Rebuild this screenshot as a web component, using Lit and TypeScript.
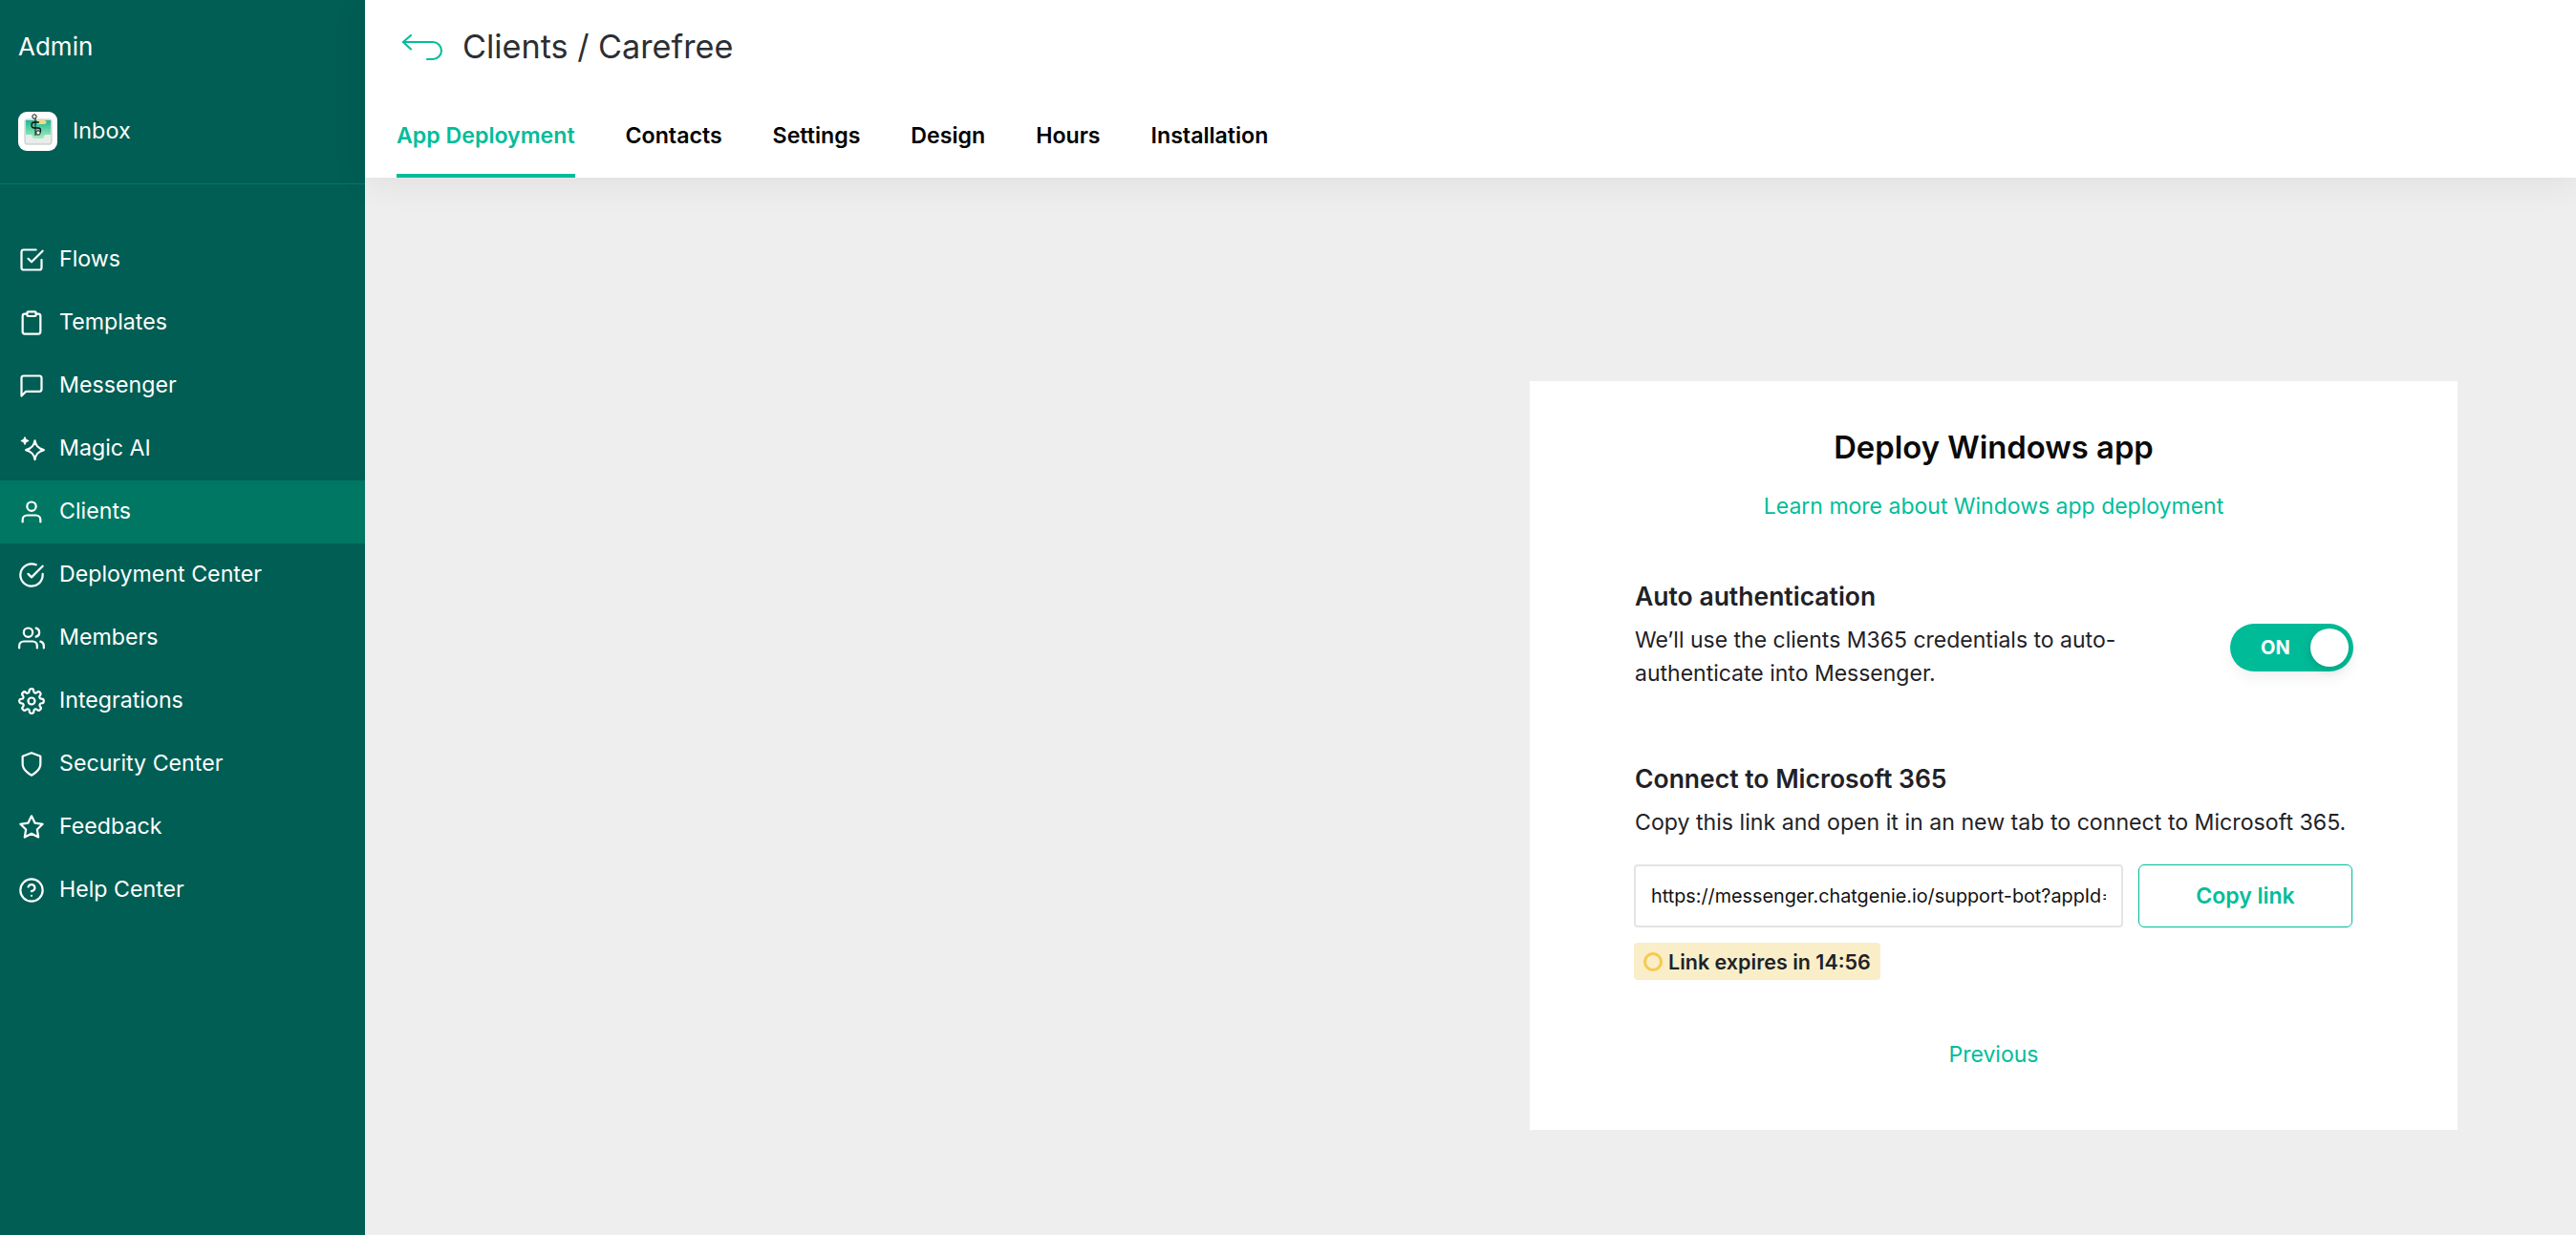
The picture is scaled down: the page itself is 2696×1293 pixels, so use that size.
import { LitElement, html, css, svg } from "lit";
import { customElement } from "lit/decorators.js";

const icons: Record<string, unknown> = {
  flows: svg`<polyline points="9 11 12 14 22 4"/><path d="M21 12v7a2 2 0 0 1-2 2H5a2 2 0 0 1-2-2V5a2 2 0 0 1 2-2h11"/>`,
  templates: svg`<path d="M16 4h2a2 2 0 0 1 2 2v14a2 2 0 0 1-2 2H6a2 2 0 0 1-2-2V6a2 2 0 0 1 2-2h2"/><rect x="8" y="2" width="8" height="4" rx="1"/>`,
  messenger: svg`<path d="M21 15a2 2 0 0 1-2 2H7l-4 4V5a2 2 0 0 1 2-2h14a2 2 0 0 1 2 2z"/>`,
  magic: svg`<path d="M15 4.5c.7 4.6 2.7 6.8 8 8.5-5.3 1.7-7.3 3.9-8 8.5-.7-4.6-2.7-6.8-8-8.5 5.3-1.7 7.3-3.9 8-8.5z"/><path d="M6 1.5l1 2.2 2.2 1-2.2 1-1 2.2-1-2.2-2.2-1 2.2-1z" fill="currentColor" stroke-width="1"/>`,
  clients: svg`<path d="M20 21v-2a4 4 0 0 0-4-4H8a4 4 0 0 0-4 4v2"/><circle cx="12" cy="7" r="4"/>`,
  deploy: svg`<path d="M22 11.08V12a10 10 0 1 1-5.93-9.14"/><polyline points="22 4 12 14.01 9 11.01"/>`,
  members: svg`<path d="M17 21v-2a4 4 0 0 0-4-4H5a4 4 0 0 0-4 4v2"/><circle cx="9" cy="7" r="4"/><path d="M23 21v-2a4 4 0 0 0-3-3.87"/><path d="M16 3.13a4 4 0 0 1 0 7.75"/>`,
  integrations: svg`<circle cx="12" cy="12" r="3"/><path d="M19.4 15a1.65 1.65 0 0 0 .33 1.82l.06.06a2 2 0 0 1-2.83 2.83l-.06-.06a1.65 1.65 0 0 0-2.82 1.17V21a2 2 0 0 1-4 0v-.09a1.65 1.65 0 0 0-2.82-1.18l-.06.06a2 2 0 0 1-2.83-2.83l.06-.06a1.65 1.65 0 0 0-1.17-2.82H3a2 2 0 0 1 0-4h.09a1.65 1.65 0 0 0 1.18-2.82l-.06-.06a2 2 0 0 1 2.83-2.83l.06.06a1.65 1.65 0 0 0 2.82-1.17V3a2 2 0 0 1 4 0v.09a1.65 1.65 0 0 0 2.82 1.18l.06-.06a2 2 0 0 1 2.83 2.83l-.06.06a1.65 1.65 0 0 0 1.17 2.82H21a2 2 0 0 1 0 4h-.09a1.65 1.65 0 0 0-1.51 1z"/>`,
  security: svg`<path d="M12 22s8-4 8-10V5l-8-3-8 3v7c0 6 8 10 8 10z"/>`,
  feedback: svg`<polygon points="12 2 15.09 8.26 22 9.27 17 14.14 18.18 21.02 12 17.77 5.82 21.02 7 14.14 2 9.27 8.91 8.26 12 2"/>`,
  help: svg`<circle cx="12" cy="12" r="10"/><path d="M9.09 9a3 3 0 0 1 5.83 1c0 2-3 3-3 3"/><line x1="12" y1="17" x2="12.01" y2="17"/>`,
};

const nav = [
  ["flows", "Flows"],
  ["templates", "Templates"],
  ["messenger", "Messenger"],
  ["magic", "Magic AI"],
  ["clients", "Clients"],
  ["deploy", "Deployment Center"],
  ["members", "Members"],
  ["integrations", "Integrations"],
  ["security", "Security Center"],
  ["feedback", "Feedback"],
  ["help", "Help Center"],
];
const tabs = ["App Deployment", "Contacts", "Settings", "Design", "Hours", "Installation"];

@customElement("app-root")
export class AppRoot extends LitElement {
  static styles = css`
    :host { display: block; width: 2696px; height: 1293px; font-family: Inter, "Liberation Sans", sans-serif; overflow: hidden; }
    .app { display: flex; height: 1293px; background: #eeeeee; }
    .side { width: 382px; flex: none; background: #005e54; color: #fff; }
    .admin { height: 97px; padding-left: 19px; display: flex; align-items: center; font-size: 26px; }
    .inbox { height: 95px; display: flex; align-items: center; gap: 16px; padding: 0 19px 0 19px; font-size: 23.4px; border-bottom: 1px solid #00796a; box-sizing: content-box; }
    .logo { width: 41px; height: 41px; border-radius: 9px; background: #fff; display: block; flex: none; margin-top: -15px; }
    .inbox span { margin-top: -17px; }
    .menu { margin-top: 46px; }
    .item { height: 66px; display: flex; align-items: center; gap: 15px; padding-left: 19px; font-size: 23.2px; }
    .item span { margin-top: -2px; }
    .item.active { background: #007763; }
    .item svg { width: 28px; height: 28px; flex: none; fill: none; stroke: currentColor; stroke-width: 1.9; stroke-linecap: round; stroke-linejoin: round; overflow: visible; }
    .main { flex: 1; min-width: 0; display: flex; flex-direction: column; }
    .head { height: 186px; flex: none; background: #fff; box-shadow: 0 4px 36px rgba(0,0,0,.07); position: relative; display: flex; flex-direction: column; }
    .crumb { height: 97px; display: flex; align-items: center; padding-left: 38px; gap: 20px; font-size: 34.2px; color: #2b2f33; flex: none; }
    .crumb svg { width: 44px; height: 30px; fill: none; stroke: #00bd9a; stroke-width: 2.1; stroke-linecap: round; stroke-linejoin: round; flex: none; }
    .tabs { flex: 1; display: flex; gap: 53px; padding-left: 33px; }
    .tab { font-size: 23.15px; font-weight: 600; color: #000; padding-top: 31px; box-sizing: border-box; border-bottom: 4px solid transparent; }
    .tab.active { color: #00bd9a; border-bottom-color: #00bd9a; }
    .body { flex: 1; display: flex; justify-content: flex-end; padding: 213px 124px 0 0; align-items: flex-start; }
    .card { width: 971px; height: 784px; background: #fff; box-sizing: border-box; padding: 0 110px; display: flex; flex-direction: column; }
    h1 { margin: 47px 0 0; font-size: 32.8px; line-height: 44px; font-weight: 600; text-align: center; color: #0a0a0a; }
    .learn { margin-top: 18px; height: 44px; line-height: 44px; font-size: 23px; text-align: center; color: #00bd9a; }
    h2 { margin: 0; font-size: 26.5px; line-height: 36px; font-weight: 600; color: #1f2226; }
    .auto { margin-top: 54px; }
    .row { display: flex; justify-content: space-between; align-items: flex-start; }
    .desc { margin: 9px 0 0; font-size: 23.15px; line-height: 35px; color: #1f2226; }
    .auto .desc { width: 560px; margin-top: 11px; font-size: 23px; }
    .toggle { width: 129px; height: 50px; margin-top: 11px; margin-right: -1px; border-radius: 25px; background: #00bb98; display: flex; align-items: center; justify-content: space-between; padding: 0 5px 0 32px; box-sizing: border-box; color: #fff; font-size: 20px; font-weight: 700; box-shadow: 0 8px 14px rgba(0,0,0,.05); }
    .knob { width: 40px; height: 40px; border-radius: 50%; background: #fff; box-shadow: -1px 3px 10px rgba(0,70,55,.22); }
    .connect { margin-top: 74px; }
    .connect .desc { margin-top: 11px; }
    .link { display: flex; gap: 16px; margin-top: 26px; }
    input { flex: 1; min-width: 0; height: 66px; box-sizing: border-box; border: 2px solid #e4e4e4; border-radius: 4px; padding: 0 16px; font: 400 19.8px Inter, sans-serif; color: #111; background: #fff; outline: none; margin-left: -1px; }
    .copy { width: 224px; height: 66px; box-sizing: border-box; border: 1.5px solid #00bd9a; border-radius: 6px; display: flex; align-items: center; justify-content: center; font-size: 23px; font-weight: 600; color: #00bd9a; }
    .badge { align-self: flex-start; margin-top: 16px; margin-left: -1px; height: 39px; display: inline-flex; align-items: center; gap: 6px; padding: 0 10px; background: #faeec8; border-radius: 4px; font-size: 21.5px; font-weight: 600; color: #1f2226; }
    .ring { width: 20px; height: 20px; border: 3px solid #f7c94f; border-radius: 50%; box-sizing: border-box; }
    .prev { margin-top: 56px; text-align: center; font-size: 23px; line-height: 44px; color: #00bd9a; }
  `;

  render() {
    return html`<div class="app">
      <aside class="side">
        <div class="admin">Admin</div>
        <div class="inbox">
          <svg class="logo" viewBox="0 0 41 41">
            <defs><linearGradient id="g" x1="0" y1="0" x2="0" y2="1"><stop offset="0" stop-color="#1cb896"/><stop offset="1" stop-color="#a5eebb"/></linearGradient></defs>
            <rect x="7" y="8" width="28" height="26" rx="2" fill="#e8ecea" stroke="#b9c4c0"/>
            <path d="M8 9h26v15h-6l-2 4h-10l-2-4H8z" fill="url(#g)"/>
            <path d="M18 5v20" stroke="#111" stroke-width="1"/>
            <path d="M20 9h8l2 2-2 2h-8z" fill="#f3da7c"/>
            <path d="M22 11h-5a3 3 0 0 0 0 6h4a2.5 2.5 0 0 1 0 5" fill="none" stroke="#111" stroke-width="1.3"/>
            <circle cx="17" cy="5" r="2.2" fill="#fff" stroke="#111"/>
            <circle cx="21" cy="22" r="2.2" fill="#fff" stroke="#111"/>
          </svg>
          <span>Inbox</span>
        </div>
        <nav class="menu">
          ${nav.map(([k, label]) => html`<div class="item ${label === "Clients" ? "active" : ""}">
            <svg viewBox="0 0 24 24">${icons[k]}</svg><span>${label}</span>
          </div>`)}
        </nav>
      </aside>
      <main class="main">
        <header class="head">
          <div class="crumb">
            <svg viewBox="0 0 44 30"><path d="M10 3L2 10l8 7.5"/><path d="M2 10h31a9 9 0 0 1 0 18h-6"/></svg>
            <span>Clients / Carefree</span>
          </div>
          <div class="tabs">
            ${tabs.map((t, i) => html`<div class="tab ${i === 0 ? "active" : ""}">${t}</div>`)}
          </div>
        </header>
        <div class="body">
          <section class="card">
            <h1>Deploy Windows app</h1>
            <div class="learn">Learn more about Windows app deployment</div>
            <div class="auto">
              <h2>Auto authentication</h2>
              <div class="row">
                <p class="desc">We’ll use the clients M365 credentials to auto-authenticate into Messenger.</p>
                <div class="toggle"><span>ON</span><span class="knob"></span></div>
              </div>
            </div>
            <div class="connect">
              <h2>Connect to Microsoft 365</h2>
              <p class="desc">Copy this link and open it in an new tab to connect to Microsoft 365.</p>
              <div class="link">
                <input readonly .value=${"https://messenger.chatgenie.io/support-bot?appId=8f3a21c7"} />
                <div class="copy">Copy link</div>
              </div>
            </div>
            <div class="badge"><span class="ring"></span><span>Link expires in 14:56</span></div>
            <div class="prev">Previous</div>
          </section>
        </div>
      </main>
    </div>`;
  }
}
